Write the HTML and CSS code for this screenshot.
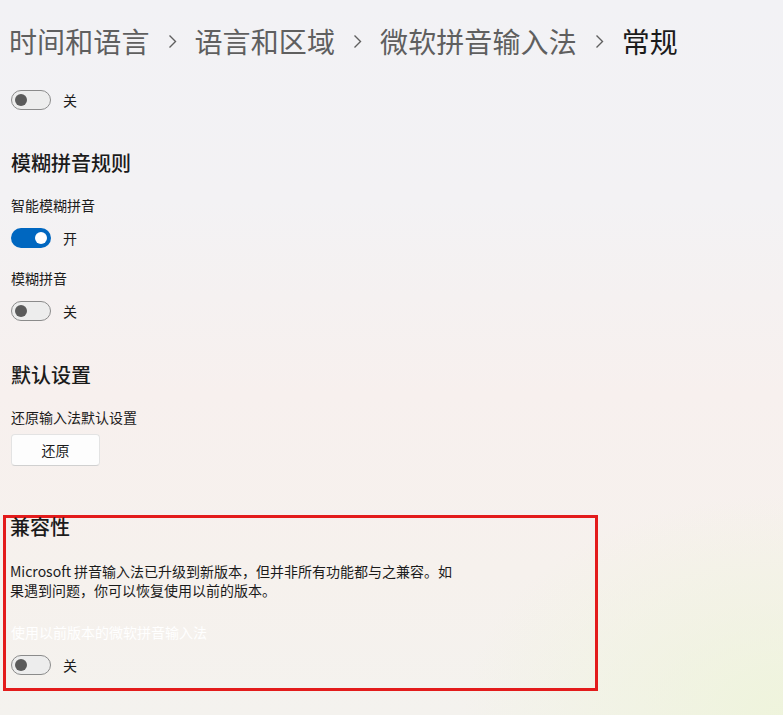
FILE: index.html
```html
<!DOCTYPE html>
<html lang="zh-CN">
<head>
<meta charset="utf-8">
<title>常规</title>
<link rel="stylesheet" href="styles.css">
</head>
<body>
<div class="page">
  <nav class="crumbs">
    <span class="crumb">时间和语言</span>
    <svg class="chev" width="9" height="15" viewBox="0 0 9 15"><path d="M1.5 1.5 L7.5 7.5 L1.5 13.5" fill="none" stroke="#5f5f5f" stroke-width="1.4"/></svg>
    <span class="crumb">语言和区域</span>
    <svg class="chev" width="9" height="15" viewBox="0 0 9 15"><path d="M1.5 1.5 L7.5 7.5 L1.5 13.5" fill="none" stroke="#5f5f5f" stroke-width="1.4"/></svg>
    <span class="crumb">微软拼音输入法</span>
    <svg class="chev" width="9" height="15" viewBox="0 0 9 15"><path d="M1.5 1.5 L7.5 7.5 L1.5 13.5" fill="none" stroke="#5f5f5f" stroke-width="1.4"/></svg>
    <span class="crumb current">常规</span>
  </nav>

  <div class="content">
    <div class="toggle-row first">
      <span class="toggle off"><span class="knob"></span></span>
      <span class="state">关</span>
    </div>

    <h2 class="heading h-fuzzy">模糊拼音规则</h2>
    <div class="label">智能模糊拼音</div>
    <div class="toggle-row">
      <span class="toggle on"><span class="knob"></span></span>
      <span class="state">开</span>
    </div>
    <div class="label l-gap">模糊拼音</div>
    <div class="toggle-row">
      <span class="toggle off"><span class="knob"></span></span>
      <span class="state">关</span>
    </div>

    <h2 class="heading h-default">默认设置</h2>
    <div class="label">还原输入法默认设置</div>
    <button class="btn">还原</button>
  </div>

  <section class="compat">
    <h2 class="heading h-compat">兼容性</h2>
    <p class="desc">Microsoft 拼音输入法已升级到新版本，但并非所有功能都与之兼容。如果遇到问题，你可以恢复使用以前的版本。</p>
    <div class="label faint">使用以前版本的微软拼音输入法</div>
    <div class="toggle-row">
      <span class="toggle off"><span class="knob"></span></span>
      <span class="state">关</span>
    </div>
  </section>
</div>
</body>
</html>
```

FILE: styles.css
```css
html, body {
  margin: 0;
  padding: 0;
}
body {
  width: 783px;
  height: 715px;
  overflow: hidden;
  font-family: "Noto Sans CJK SC", "Noto Sans", sans-serif;
  color: #1b1b1b;
  background:
    radial-gradient(ellipse 320px 220px at 100% 100%, rgba(238, 244, 218, 0.9) 0%, rgba(238, 244, 218, 0) 100%),
    linear-gradient(180deg, #f2f2f5 0%, #f3f2f4 28%, #f7f0ee 55%, #f6f1ed 80%, #f4f2ee 100%);
}
.page {
  display: flex;
  flex-direction: column;
}
.crumbs {
  display: flex;
  align-items: center;
  padding: 21px 0 0 9px;
  height: 40px;
}
.crumb {
  font-size: 28px;
  line-height: 40px;
  color: #5f5f5f;
  font-weight: 400;
  letter-spacing: 0.1px;
}
.crumb.current {
  color: #1b1b1b;
}
.chev {
  margin: 0 18px 0 18px;
  flex: none;
}
.content {
  display: flex;
  flex-direction: column;
  align-items: flex-start;
  padding-left: 11px;
}
.toggle-row {
  display: flex;
  align-items: center;
  height: 20px;
  margin-top: 13px;
}
.toggle-row.first {
  margin-top: 29px;
}
.toggle {
  box-sizing: border-box;
  width: 40px;
  height: 20px;
  border-radius: 10px;
  display: flex;
  align-items: center;
  padding: 0 3px;
}
.toggle.off {
  border: 1px solid #8b8b8b;
  background: #ededed;
}
.toggle.on {
  background: #0067c0;
  justify-content: flex-end;
  padding: 0 4px;
}
.knob {
  width: 12px;
  height: 12px;
  border-radius: 50%;
}
.toggle.off .knob {
  background: #5b5b5b;
}
.toggle.on .knob {
  background: #ffffff;
}
.state {
  margin-left: 12px;
  font-size: 14px;
  line-height: 20px;
  color: #1b1b1b;
}
.heading {
  margin: 0;
  font-size: 20px;
  line-height: 28px;
  font-weight: 500;
  color: #1b1b1b;
}
.h-fuzzy {
  margin-top: 39px;
}
.h-default {
  margin-top: 40px;
}
.label {
  font-size: 14px;
  line-height: 20px;
  margin-top: 18px;
  color: #1b1b1b;
}
.label.l-gap {
  margin-top: 20px;
}
.btn {
  margin-top: 7px;
  box-sizing: border-box;
  width: 89px;
  height: 32px;
  border: 1px solid #e3e3e3;
  border-bottom-color: #d0d0d0;
  border-radius: 4px;
  background: #fdfdfd;
  font-family: inherit;
  font-size: 14px;
  color: #1b1b1b;
  padding: 0;
}
.compat {
  margin: 49px 0 0 3px;
  width: 595px;
  box-sizing: border-box;
  border: 3px solid #e31b1b;
  padding: 0 5px 13px 5px;
  display: flex;
  flex-direction: column;
  align-items: flex-start;
}
.h-compat {
  line-height: 20px;
  margin-top: -1px;
  margin-left: -1px;
}
.desc {
  margin: 25px 0 0 -1px;
  width: 446px;
  font-size: 14px;
  line-height: 19px;
  color: #1b1b1b;
}
.label.faint {
  color: #ffffff;
  margin-top: 22px;
}
.compat .toggle-row {
  margin-top: 13px;
}
```
